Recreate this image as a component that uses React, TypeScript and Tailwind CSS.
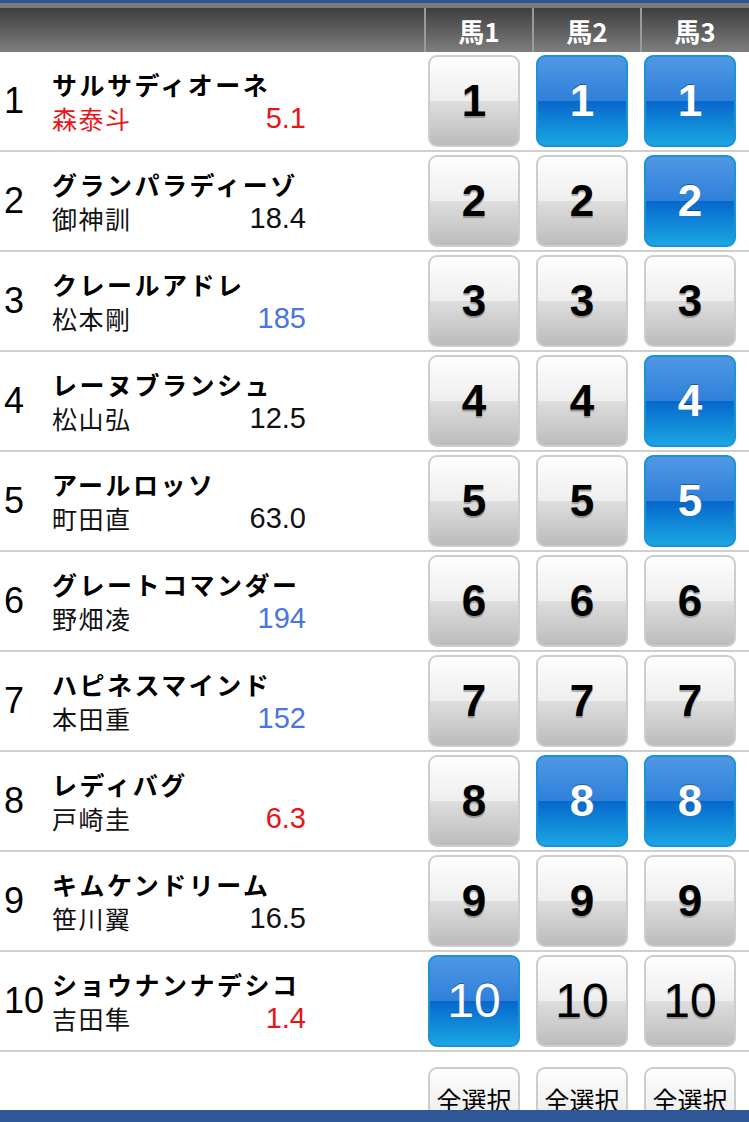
import React from 'react'

interface Horse {
  no: number
  name: string
  jockey: string
  odds: string
  tone: 'red' | 'blue' | 'black'
  jockeyRed?: boolean
  sel: [boolean, boolean, boolean]
}

const HORSES: Horse[] = [
  { no: 1, name: 'サルサディオーネ', jockey: '森泰斗', odds: '5.1', tone: 'red', jockeyRed: true, sel: [false, true, true] },
  { no: 2, name: 'グランパラディーゾ', jockey: '御神訓', odds: '18.4', tone: 'black', sel: [false, false, true] },
  { no: 3, name: 'クレールアドレ', jockey: '松本剛', odds: '185', tone: 'blue', sel: [false, false, false] },
  { no: 4, name: 'レーヌブランシュ', jockey: '松山弘', odds: '12.5', tone: 'black', sel: [false, false, true] },
  { no: 5, name: 'アールロッソ', jockey: '町田直', odds: '63.0', tone: 'black', sel: [false, false, true] },
  { no: 6, name: 'グレートコマンダー', jockey: '野畑凌', odds: '194', tone: 'blue', sel: [false, false, false] },
  { no: 7, name: 'ハピネスマインド', jockey: '本田重', odds: '152', tone: 'blue', sel: [false, false, false] },
  { no: 8, name: 'レディバグ', jockey: '戸崎圭', odds: '6.3', tone: 'red', sel: [false, true, true] },
  { no: 9, name: 'キムケンドリーム', jockey: '笹川翼', odds: '16.5', tone: 'black', sel: [false, false, false] },
  { no: 10, name: 'ショウナンナデシコ', jockey: '吉田隼', odds: '1.4', tone: 'red', sel: [true, false, false] },
]

const ODDS_COLORS: Record<string, string> = {
  red: 'text-[#e8141b]',
  blue: 'text-[#4a74e2]',
  black: 'text-[#111]',
}

const jp = { fontFamily: '"Noto Sans CJK JP", "Noto Sans", sans-serif' }
const num = { fontFamily: '"Liberation Sans", Arial, sans-serif' }

function NumButton({ n, on }: { n: number; on: boolean }) {
  return (
    <div
      className={
        on
          ? 'w-[92px] h-[92px] rounded-[9px] border-2 border-[#1b93d6] bg-[linear-gradient(to_bottom,#4f97e3_0%,#2f80da_50%,#0767cc_50%,#1aa6e2_100%)] flex items-center justify-center'
          : 'w-[92px] h-[92px] rounded-[9px] border-2 border-[#cdcdcd] bg-[linear-gradient(to_bottom,#fefefe_0%,#eeeeee_50%,#dedede_50%,#bcbcbc_100%)] flex items-center justify-center'
      }
    >
      <span
        style={num}
        className={
          (n === 10 ? 'text-[48px] font-normal ' : 'text-[44px] font-bold ') +
          (on
            ? 'text-white [text-shadow:0_-1px_0_rgba(0,0,0,0.35)]'
            : 'text-black [text-shadow:0_2px_1px_rgba(0,0,0,0.3)]')
        }
      >
        {n}
      </span>
    </div>
  )
}

export default function App() {
  return (
    <div className="w-[749px] h-[1122px] flex flex-col bg-white overflow-hidden">
      <div className="flex-1 overflow-hidden">
        {/* Header */}
        <div className="border-t-[3px] border-[#2c5596]">
          <div className="h-[5px] bg-[#7b7b7b]" />
          <div className="h-[44px] flex bg-[linear-gradient(to_bottom,#3e3e3e,#7e7e7e)]">
            <div className="w-[424px]" />
            {['馬1', '馬2', '馬3'].map(h => (
              <div
                key={h}
                className="w-[108px] border-l-2 border-[#9a9a9a] flex items-center justify-center text-white text-[26px] font-bold"
                style={jp}
              >
                {h}
              </div>
            ))}
          </div>
        </div>

        {/* Rows */}
        {HORSES.map(h => (
          <div key={h.no} className="h-[100px] flex items-center border-b-2 border-[#cfcfcf]">
            <div className="w-[52px] pl-[4px] text-[36px] text-black" style={num}>
              {h.no}
            </div>
            <div className="w-[254px] flex flex-col gap-[1px]">
              <div className="text-[25px] font-bold leading-[33px] text-black whitespace-nowrap tracking-[2.5px]" style={jp}>
                {h.name}
              </div>
              <div className="flex justify-between items-center leading-[33px]">
                <span className={'text-[25px] tracking-[1.5px] ' + (h.jockeyRed ? 'text-[#e8141b]' : 'text-[#111]')} style={jp}>
                  {h.jockey}
                </span>
                <span className={'text-[29px] ' + ODDS_COLORS[h.tone]} style={num}>
                  {h.odds}
                </span>
              </div>
            </div>
            <div className="w-[118px]" />
            {h.sel.map((on, i) => (
              <div key={i} className="w-[108px] pl-[4px]">
                <NumButton n={h.no} on={on} />
              </div>
            ))}
          </div>
        ))}

        {/* 全選択 */}
        <div className="flex pt-[15px]">
          <div className="w-[424px]" />
          {[0, 1, 2].map(i => (
            <div key={i} className="w-[108px] pl-[4px]">
              <div
                className="w-[92px] h-[80px] rounded-[9px] border-2 border-[#cdcdcd] bg-[linear-gradient(to_bottom,#fefefe,#e2e2e2)] flex justify-center pt-[12px] text-[25px] text-black"
                style={jp}
              >
                全選択
              </div>
            </div>
          ))}
        </div>
      </div>
      <div className="h-[12px] bg-[#2e5798] shrink-0" />
    </div>
  )
}
